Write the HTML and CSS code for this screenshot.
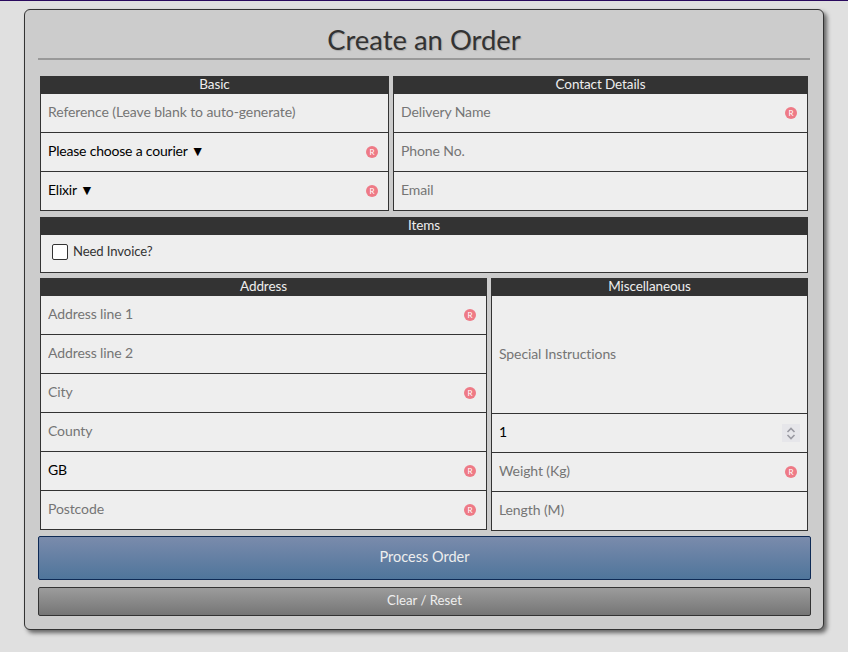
FILE: index.html
```html
<!DOCTYPE html>
<html lang="en">
<head>
<meta charset="utf-8">
<title>Create an Order</title>
<link rel="stylesheet" href="styles.css">
</head>
<body>
<main class="panel">
  <h1 class="title">Create an Order</h1>
  <form class="form">
    <div class="row row-top">
      <section class="group basic">
        <h2 class="group-head">Basic</h2>
        <div class="field"><input class="input" placeholder="Reference (Leave blank to auto-generate)"></div>
        <div class="field"><span class="value">Please choose a courier ▼</span><span class="req">R</span></div>
        <div class="field"><span class="value">Elixir ▼</span><span class="req">R</span></div>
      </section>
      <section class="group contact">
        <h2 class="group-head">Contact Details</h2>
        <div class="field"><input class="input" placeholder="Delivery Name"><span class="req">R</span></div>
        <div class="field"><input class="input" placeholder="Phone No."></div>
        <div class="field"><input class="input" placeholder="Email"></div>
      </section>
    </div>
    <section class="group items">
      <h2 class="group-head">Items</h2>
      <label class="check-row"><span class="check"></span><span class="check-label">Need Invoice?</span></label>
    </section>
    <div class="row row-bottom">
      <section class="group address">
        <h2 class="group-head">Address</h2>
        <div class="field"><input class="input" placeholder="Address line 1"><span class="req">R</span></div>
        <div class="field"><input class="input" placeholder="Address line 2"></div>
        <div class="field"><input class="input" placeholder="City"><span class="req">R</span></div>
        <div class="field"><input class="input" placeholder="County"></div>
        <div class="field"><span class="value">GB</span><span class="req">R</span></div>
        <div class="field"><input class="input" placeholder="Postcode"><span class="req">R</span></div>
      </section>
      <section class="group misc">
        <h2 class="group-head">Miscellaneous</h2>
        <div class="field field-tall"><span class="placeholder">Special Instructions</span></div>
        <div class="field"><span class="value">1</span>
          <span class="spinner"><svg width="10" height="15" viewBox="0 0 10 15" fill="none" stroke="#9a9aa2" stroke-width="1.6"><path d="M1.5 6 5 2.5 8.500 6"/><path d="M1.500 9 5 12.500 8.500 9"/></svg></span>
        </div>
        <div class="field"><input class="input" placeholder="Weight (Kg)"><span class="req">R</span></div>
        <div class="field"><input class="input" placeholder="Length (M)"></div>
      </section>
    </div>
    <button type="button" class="btn btn-primary">Process Order</button>
    <button type="button" class="btn btn-secondary">Clear / Reset</button>
  </form>
</main>
</body>
</html>
```
FILE: styles.css
```css
* { box-sizing: border-box; }
html, body { height: 100%; }
body {
  margin: 0;
  padding: 9px 24px 0;
  background: #e0e0e0;
  border-top: 1px solid #2a0a5e;
  font-family: "Lato", "Open Sans", sans-serif;
  font-size: 14px;
  letter-spacing: -0.1px;
  overflow: hidden;
}
.panel {
  width: 800px;
  height: 621px;
  margin-top: -1px;
  padding: 13px 13px 0;
  background: #ccc;
  border: 1px solid #333;
  border-radius: 6px;
  box-shadow: 3px 3px 4px #666;
}
.title {
  margin: 0;
  height: 37px;
  border-bottom: 2px solid #999;
  text-align: center;
  font-size: 27.4px;
  line-height: 33px;
  font-weight: 400;
  letter-spacing: 0;
  color: #333;
  text-shadow: 1px 1px 1px #aaa;
}
.form {
  display: flex;
  flex-direction: column;
  margin-top: 16px;
}
.row { display: flex; margin: 0 2px; }
.row-top { gap: 4px; }
.row-bottom { gap: 4px; margin-top: 5px; }
.group { display: flex; flex-direction: column; border: 1px solid #333; border-top: 0; background: #eee; }
.basic { width: 349px; }
.contact { width: 415px; }
.address { width: 447px; height: 252px; }
.misc { width: 317px; height: 253px; }
.items { margin: 6px 2px 0; height: 56px; }
.group-head {
  margin: 0 -1px;
  height: 18px;
  background: #333;
  color: #eee;
  font-size: 13.5px;
  font-weight: 400;
  line-height: 17px;
  text-align: center;
}
.field {
  display: flex;
  align-items: center;
  justify-content: space-between;
  height: 39px;
  padding: 0 10px 0 7px;
  border-bottom: 1px solid #333;
}
.field:last-child { border-bottom: 0; height: 38px; }
.field-tall { height: 118px; }
.input {
  flex: 1;
  min-width: 0;
  border: 0;
  padding: 0 0 4px;
  background: transparent;
  font: inherit;
  letter-spacing: inherit;
  color: #000;
  outline: 0;
}
.input::placeholder, .placeholder { color: #757575; opacity: 1; }
.placeholder { padding-bottom: 2px; }
.value { color: #000; padding-bottom: 4px; letter-spacing: -0.2px; }
.req {
  flex: none;
  width: 12px;
  height: 12px;
  border-radius: 50%;
  background: #ee7a86;
  color: #fff;
  font-size: 8px;
  line-height: 12px;
  text-align: center;
}
.spinner {
  display: flex;
  align-items: center;
  justify-content: center;
  width: 18px;
  height: 18px;
  margin-right: -3px;
  background: #e6e6ea;
}
.check-row { display: flex; align-items: center; gap: 5px; height: 34px; padding-left: 11px; }
.check {
  width: 16px;
  height: 16px;
  background: #fff;
  border: 1px solid #333;
  border-radius: 2px;
}
.check-label { color: #333; font-size: 13.1px; padding-bottom: 2px; }
.btn {
  display: block;
  width: 773px;
  font: inherit;
  color: #eee;
  border-radius: 2px;
  cursor: pointer;
  padding: 0 0 4px;
}
.btn-primary {
  height: 44px;
  margin-top: 5px;
  border: 1px solid #0e2a55;
  background: linear-gradient(#7a8bac, #4f759b);
  font-size: 14.5px;
}
.btn-secondary {
  height: 29px;
  margin-top: 7px;
  border: 1px solid #333;
  background: linear-gradient(#9c9c9c, #757575);
  font-size: 13.2px;
}
```
